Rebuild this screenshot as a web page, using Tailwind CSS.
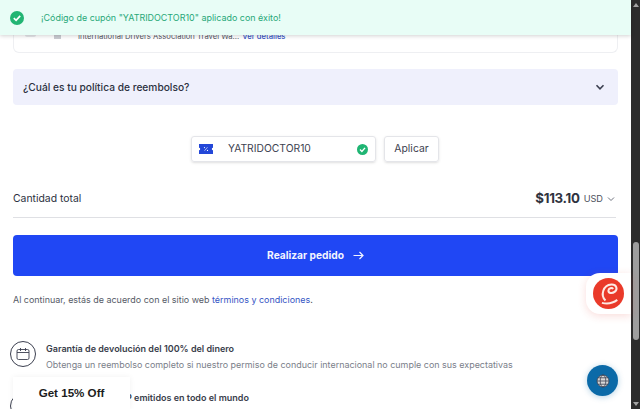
<!DOCTYPE html>
<html lang="es">
<head>
    <meta charset="UTF-8">
    <meta name="viewport" content="width=device-width, initial-scale=1.0">
    <title>Checkout</title>
    <script src="https://cdn.jsdelivr.net/npm/@tailwindcss/browser@4"></script>
</head>
<body class="bg-white font-['Inter',sans-serif] text-[#2b3040] overflow-hidden">
<div class="relative flex h-[409px] w-[640px] overflow-hidden">
    <main class="w-[631px] shrink-0 px-[13px]">
        <!-- order item, mostly under the toast -->
        <div class="flex h-[53px] w-[605px] items-start rounded-b-md border border-t-0 border-[#eeeff2] pl-[11px] pt-[31px]">
            <span class="mt-[2px] mr-[18px] h-[4px] w-[11px] rounded-full bg-[#e6e7ea]"></span>
            <span class="mr-[17px] h-[8px] w-[7px] bg-[#c9cbd1]"></span>
            <p class="text-[7.65px] leading-[12px] text-[#555a66]">International Drivers Association Travel Wa... <a class="ml-[1px] font-medium text-[#3454c4]">Ver detalles</a></p>
        </div>

        <div class="mt-[16px] flex h-[36px] w-[605px] items-center justify-between rounded-[4px] bg-[#eff0fc] pl-[10px] pr-[13px]">
            <span class="pt-[1px] text-[10.2px] font-medium text-[#2b3040]">¿Cuál es tu política de reembolso?</span>
            <svg class="h-[10px] w-[10px] text-[#3c4050]" viewBox="0 0 10 10" fill="none" stroke="currentColor" stroke-width="1.6"><path d="M1.500 3.200 5 6.800l3.500-3.600"/></svg>
        </div>

        <div class="mt-[31px] flex justify-center gap-[8px] pr-[1px]">
            <div class="flex h-[26px] w-[185px] items-center rounded-[3px] border border-[#e4e5e9] pl-[7px] pr-[7px] shadow-sm">
                <svg class="h-[10px] w-[14px] shrink-0" viewBox="0 0 14 10"><path fill="#2347d8" d="M0 0h14v3.800a1.200 1.200 0 0 0 0 2.400V10H0V6.200a1.200 1.200 0 0 0 0-2.400z"/><path stroke="#fff" stroke-width=".6" d="M5.500 6.800 8.500 3.200"/><circle cx="5.500" cy="3.600" r=".6" fill="#fff"/><circle cx="8.500" cy="6.400" r=".6" fill="#fff"/></svg>
                <span class="ml-[15px] flex-1 text-[10.3px] text-[#3d4250]">YATRIDOCTOR10</span>
                <svg class="h-[11px] w-[11px]" viewBox="0 0 11 11"><circle cx="5.500" cy="5.500" r="5.500" fill="#1fb573"/><path d="M3 5.600 4.900 7.400 8 3.900" fill="none" stroke="#fff" stroke-width="1.400"/></svg>
            </div>
            <button class="h-[26px] w-[55px] rounded-[3px] border border-[#e4e5e9] text-[10.4px] text-[#3d4250] shadow-sm">Aplicar</button>
        </div>

        <div class="mt-[24px] flex h-[32px] w-[603px] items-center justify-between border-b border-[#dfe0e4] pb-[6px]">
            <span class="text-[10.4px] text-[#2b3040]">Cantidad total</span>
            <div class="flex items-center">
                <span class="text-[13.3px] font-bold tracking-[-0.3px] text-[#30343f]">$113.10</span>
                <span class="ml-[4px] text-[9.2px] text-[#4c505c]">USD</span>
                <svg class="ml-[4px] mr-[1px] h-[8px] w-[8px] text-[#70747f]" viewBox="0 0 8 8" fill="none" stroke="currentColor" stroke-width="1"><path d="M1 2.500 4 5.500l3-3"/></svg>
            </div>
        </div>

        <button class="mt-[17px] flex h-[41px] w-[605px] items-center justify-center gap-[9px] rounded-[4px] bg-[#2047f4] text-[10.2px] font-bold text-[#f2f4ff]">
            Realizar pedido
            <svg class="h-[11px] w-[11px]" viewBox="0 0 11 11" fill="none" stroke="currentColor" stroke-width="1.200"><path d="M0.500 5.500h9.500M6.500 2l3.500 3.500L6.500 9"/></svg>
        </button>

        <p class="mt-[17px] text-[8.95px] leading-[14px] text-[#555a66]">Al continuar, estás de acuerdo con el sitio web <a class="text-[#3454c4]">términos y condiciones</a>.</p>

        <div class="mt-[35px] flex items-start">
            <div class="-mt-[1px] -ml-[3px] flex h-[26px] w-[26px] items-center justify-center rounded-full border border-[#3c4050]">
                <svg class="h-[14px] w-[14px] text-[#3c4050]" viewBox="0 0 14 14" fill="none" stroke="currentColor" stroke-width="0.9"><rect x="1" y="2.500" width="12" height="10" rx="1.500"/><path d="M1 5.500h12M4.500 1v3M9.500 1v3"/></svg>
            </div>
            <div class="ml-[10px]">
                <p class="text-[9px] font-semibold leading-[14px] text-[#3a3e4b]">Garantía de devolución del 100% del dinero</p>
                <p class="mt-[2px] text-[8.95px] leading-[14px] text-[#7a7e89]">Obtenga un reembolso completo si nuestro permiso de conducir internacional no cumple con sus expectativas</p>
            </div>
        </div>

        <div class="mt-[19px] flex items-start">
            <div class="mt-[2px] -ml-[3px] h-[26px] w-[26px] shrink-0 rounded-full border border-[#3c4050]"></div>
            <!-- the start of this line is hidden by the promo tab -->
            <p class="ml-[90px] text-[9px] font-semibold leading-[14px] text-[#3a3e4b]">P emitidos en todo el mundo</p>
        </div>
    </main>

    <!-- scrollbar -->
    <aside class="flex w-[9px] shrink-0 flex-col items-center justify-between bg-[#2c2c2c] py-[3px]">
        <span class="h-0 w-0 border-x-[3px] border-b-[4px] border-x-transparent border-b-[#a3a3a3]"></span>
        <span class="absolute top-[242px] h-[98px] w-[6px] rounded-full bg-[#9e9e9e]"></span>
        <span class="h-0 w-0 border-x-[3px] border-t-[4px] border-x-transparent border-t-[#a3a3a3]"></span>
    </aside>

    <!-- toast -->
    <div class="absolute left-0 top-0 flex h-[35px] w-[631px] items-center bg-[#e8fdf6] pl-[10px] shadow-[0_1px_4px_rgba(0,0,0,0.18)]">
        <svg class="h-[14px] w-[14px]" viewBox="0 0 14 14"><circle cx="7" cy="7" r="7" fill="#22b573"/><path d="M3.800 7.200 6.100 9.400 10.200 4.900" fill="none" stroke="#fff" stroke-width="1.700"/></svg>
        <span class="ml-[17px] text-[8.95px] text-[#27a878]">¡Código de cupón "YATRIDOCTOR10" aplicado con éxito!</span>
    </div>

    <!-- red chat badge -->
    <div class="absolute left-[586px] top-[273px] flex h-[41px] w-[45px] items-center rounded-l-[14px] bg-white pl-[7px] shadow-[0_2px_8px_rgba(220,60,50,0.18)]">
        <div class="flex h-[31px] w-[31px] items-center justify-center rounded-full bg-[#ea3a2a]">
            <svg class="h-[26px] w-[26px]" viewBox="0 0 22 22" fill="none" stroke="#fdeae4" stroke-width="1.700"><path d="M5 18.500c4 1 9 .5 13-2.500M8 16.500C3.500 12 6 3.500 13 3c4.500-.3 5.500 4 3 6-2.200 1.700-5.500 1.500-5.500-.8 0-2 3-3 4-1.400"/></svg>
        </div>
    </div>

    <!-- language button -->
    <div class="absolute left-[587px] top-[365px] flex h-[31px] w-[31px] items-center justify-center rounded-full bg-[#0b6aa8] shadow-[0_1px_6px_rgba(11,106,168,0.3)]">
        <svg class="h-[14px] w-[14px]" viewBox="0 0 14 14" fill="#d8d8d8" stroke="#3c4050" stroke-width="0.8"><circle cx="7" cy="7" r="6"/><ellipse cx="7" cy="7" rx="2.800" ry="6" fill="none"/><path d="M1 7h12M2 3.800h10M2 10.200h10" fill="none"/></svg>
    </div>

    <!-- promo tab -->
    <div class="absolute left-[13px] top-[377px] h-[32px] w-[117px] bg-white pt-[7px] text-center font-['Liberation_Sans',sans-serif] text-[11.6px] font-bold text-[#1c1c1c] shadow-[0_0_6px_rgba(0,0,0,0.06)]">Get 15% Off</div>
</div>
</body>
</html>
